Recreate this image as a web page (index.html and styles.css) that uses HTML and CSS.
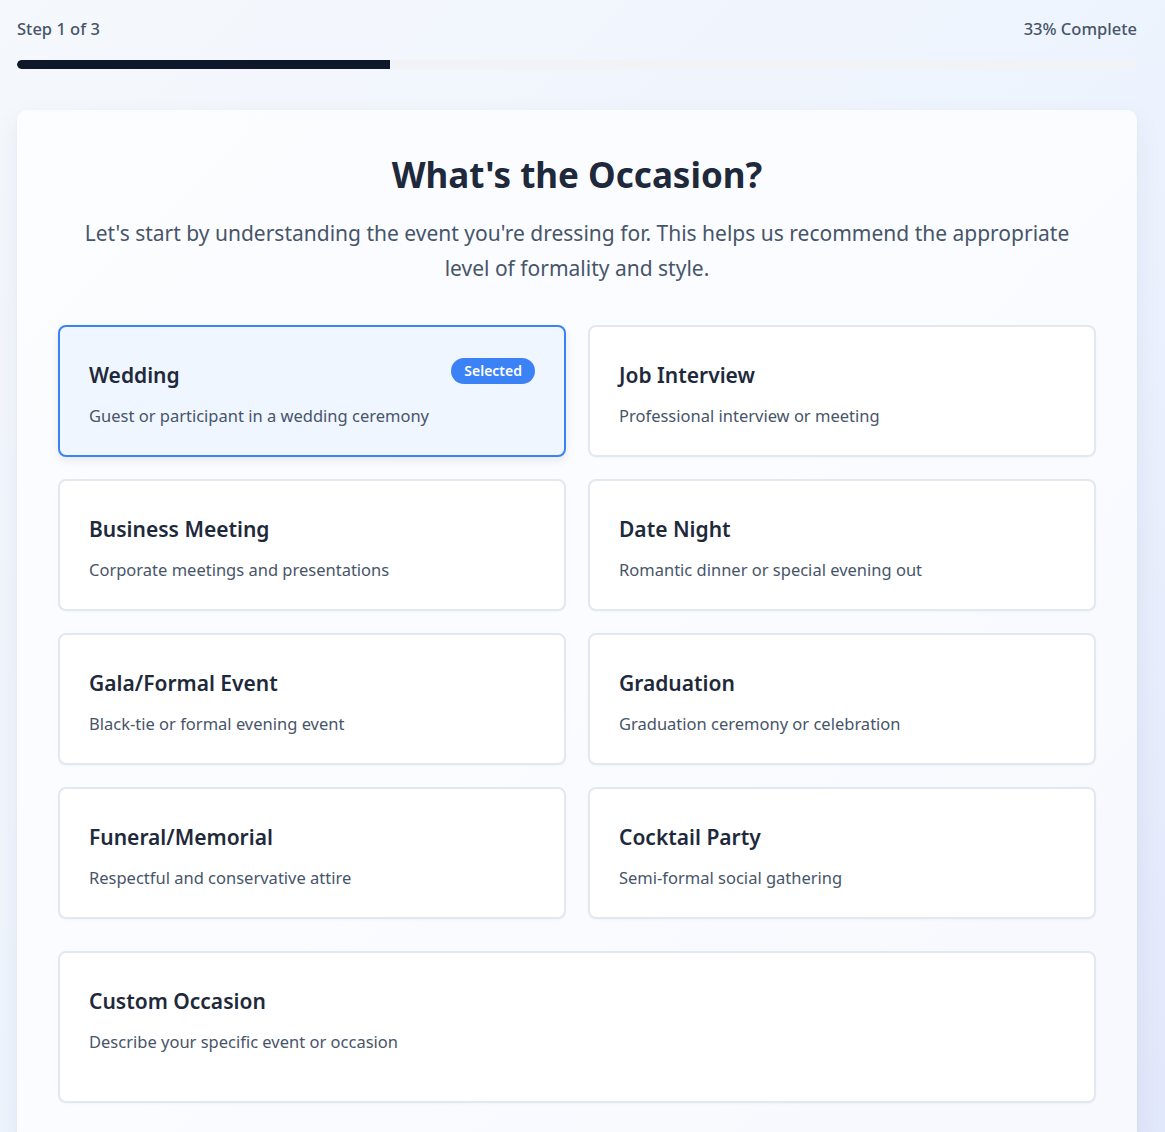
FILE: index.html
```html
<!DOCTYPE html>
<html>
<head>
<meta charset="utf-8">
<link rel="stylesheet" href="styles.css">
</head>
<body>
<div class="page">
  <div class="progress">
    <div class="progress-labels">
      <span>Step 1 of 3</span>
      <span>33% Complete</span>
    </div>
    <div class="track"><div class="fill" style="width:33.33%"></div></div>
  </div>

  <main class="panel">
    <h1 class="title">What's the Occasion?</h1>
    <p class="lead">Let's start by understanding the event you're dressing for. This helps us recommend the appropriate level of formality and style.</p>

    <div class="grid">
      <div class="option selected">
        <div class="option-head">
          <h3>Wedding</h3>
          <span class="badge">Selected</span>
        </div>
        <p>Guest or participant in a wedding ceremony</p>
      </div>
      <div class="option">
        <div class="option-head"><h3>Job Interview</h3></div>
        <p>Professional interview or meeting</p>
      </div>
      <div class="option">
        <div class="option-head"><h3>Business Meeting</h3></div>
        <p>Corporate meetings and presentations</p>
      </div>
      <div class="option">
        <div class="option-head"><h3>Date Night</h3></div>
        <p>Romantic dinner or special evening out</p>
      </div>
      <div class="option">
        <div class="option-head"><h3>Gala/Formal Event</h3></div>
        <p>Black-tie or formal evening event</p>
      </div>
      <div class="option">
        <div class="option-head"><h3>Graduation</h3></div>
        <p>Graduation ceremony or celebration</p>
      </div>
      <div class="option">
        <div class="option-head"><h3>Funeral/Memorial</h3></div>
        <p>Respectful and conservative attire</p>
      </div>
      <div class="option">
        <div class="option-head"><h3>Cocktail Party</h3></div>
        <p>Semi-formal social gathering</p>
      </div>
    </div>

    <div class="option custom">
      <div class="option-head"><h3>Custom Occasion</h3></div>
      <p>Describe your specific event or occasion</p>
    </div>
  </main>
</div>
</body>
</html>
```

FILE: styles.css
```css
* { box-sizing: border-box; }
html, body { margin: 0; padding: 0; }
body {
  font-family: "Noto Sans", "Open Sans", sans-serif;
  background: linear-gradient(135deg, #f5f8fc 0%, #eef4fe 50%, #e2e8fb 100%);
  min-height: 100vh;
  color: #1e293b;
}
.page {
  padding: 17px 28px 0 17px;
}
.progress-labels {
  display: flex;
  justify-content: space-between;
  font-size: 16.5px;
  font-weight: 500;
  color: #475569;
  line-height: 24px;
}
.track {
  margin-top: 19px;
  height: 9px;
  border-radius: 5px;
  background: #f1f3f7;
  overflow: hidden;
}
.fill {
  height: 100%;
  background: #0f172a;
  border-radius: 5px 0 0 5px;
}
.panel {
  margin-top: 41px;
  background: rgba(255,255,255,0.7);
  border-radius: 10px;
  box-shadow: 0 10px 30px rgba(30,41,59,0.06), 0 1px 3px rgba(30,41,59,0.04);
  padding: 40px 41px 40px;
}
.title {
  margin: 0;
  text-align: center;
  font-size: 35px;
  line-height: 50px;
  font-weight: 700;
  color: #1e293b;
}
.lead {
  margin: 16px auto 0;
  text-align: center;
  font-size: 21px;
  line-height: 35px;
  color: #475569;
  max-width: 1000px;
}
.grid {
  margin-top: 39px;
  display: grid;
  grid-template-columns: 1fr 1fr;
  gap: 22px;
}
.option {
  background: #fff;
  border: 2px solid #e2e8f0;
  border-radius: 8px;
  padding: 34px 29px 28px;
  height: 132px;
  box-shadow: 0 1px 2px rgba(15,23,42,0.03);
}
.option.selected {
  background: #eff6ff;
  border-color: #3b82f6;
  box-shadow: 0 4px 10px rgba(15,23,42,0.08);
}
.option-head {
  display: flex;
  align-items: flex-start;
  justify-content: space-between;
  height: 28px;
}
.option h3 {
  margin: 0;
  font-size: 21px;
  line-height: 28px;
  font-weight: 600;
  color: #1e293b;
}
.option p {
  margin: 15px 0 0;
  font-size: 16.5px;
  line-height: 24px;
  color: #475569;
}
.badge {
  margin-top: -3px;
  background: #3b82f6;
  color: #fff;
  font-size: 14px;
  font-weight: 600;
  line-height: 26px;
  height: 26px;
  padding: 0 13px;
  border-radius: 13px;
}
.custom {
  margin-top: 32px;
  height: 152px;
}
```
